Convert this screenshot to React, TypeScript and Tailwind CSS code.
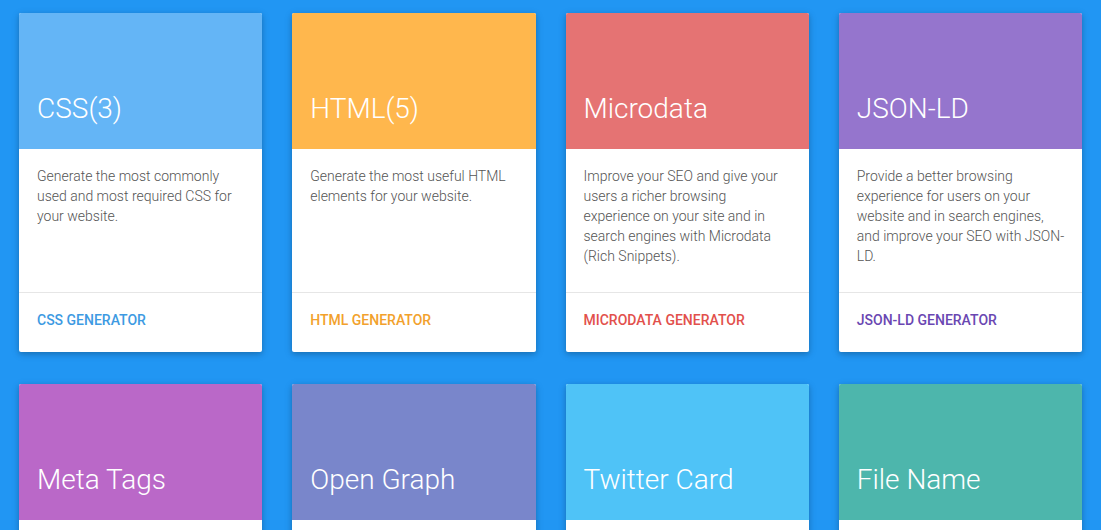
const cards = [
  {
    title: 'CSS(3)',
    text: 'Generate the most commonly used and most required CSS for your website.',
    link: 'CSS Generator',
    head: 'bg-[#64b5f6]',
    color: 'text-[#3d9ae2]',
  },
  {
    title: 'HTML(5)',
    text: 'Generate the most useful HTML elements for your website.',
    link: 'HTML Generator',
    head: 'bg-[#ffb74d]',
    color: 'text-[#f2a12c]',
  },
  {
    title: 'Microdata',
    text: 'Improve your SEO and give your users a richer browsing experience on your site and in search engines with Microdata (Rich Snippets).',
    link: 'Microdata Generator',
    head: 'bg-[#e57373]',
    color: 'text-[#e2504c]',
  },
  {
    title: 'JSON-LD',
    text: 'Provide a better browsing experience for users on your website and in search engines, and improve your SEO with JSON-LD.',
    link: 'JSON-LD Generator',
    head: 'bg-[#9575cd]',
    color: 'text-[#6a47b2]',
  },
  {
    title: 'Meta Tags',
    text: 'Generate the meta tags that every website should have in its head.',
    link: 'Meta Tags Generator',
    head: 'bg-[#ba68c8]',
    color: 'text-[#a34cb4]',
  },
  {
    title: 'Open Graph',
    text: 'Control how your pages look when they are shared on Facebook and other social networks.',
    link: 'Open Graph Generator',
    head: 'bg-[#7986cb]',
    color: 'text-[#4f5fb5]',
  },
  {
    title: 'Twitter Card',
    text: 'Attach rich photos, videos and media to tweets that link to your content.',
    link: 'Twitter Card Generator',
    head: 'bg-[#4fc3f7]',
    color: 'text-[#22a8e6]',
  },
  {
    title: 'File Name',
    text: 'Turn any text into a clean, readable and SEO friendly file name.',
    link: 'File Name Generator',
    head: 'bg-[#4db6ac]',
    color: 'text-[#26998e]',
  },
];

function Card({ card }: { card: (typeof cards)[number] }) {
  return (
    <div className="bg-white rounded-[2px] overflow-hidden shadow-[0_2px_5px_0_rgba(0,0,0,0.16),0_2px_10px_0_rgba(0,0,0,0.12)]">
      <div className={`${card.head} h-[136px] flex items-end px-[18px] pb-[24px]`}>
        <h2 className="text-[28px] leading-[32px] font-light text-white">{card.title}</h2>
      </div>
      <div className="h-[143px] pl-[18px] pr-[14px] pt-[17px]">
        <p className="text-[14px] leading-[20px] font-light text-[#555]">{card.text}</p>
      </div>
      <div className="h-[60px] border-t border-[#e6e6e6] px-[18px] pt-[15px]">
        <a className={`${card.color} text-[14px] leading-[20px] font-medium uppercase`}>{card.link}</a>
      </div>
    </div>
  );
}

export default function App() {
  return (
    <div className="min-h-[530px] bg-[#2196f3] font-['Roboto','Liberation_Sans',sans-serif]">
      <div className="grid grid-cols-4 gap-x-[30px] gap-y-[32px] px-[19px] pt-[13px] pb-8">
        {cards.map((card) => (
          <Card key={card.title} card={card} />
        ))}
      </div>
    </div>
  );
}
